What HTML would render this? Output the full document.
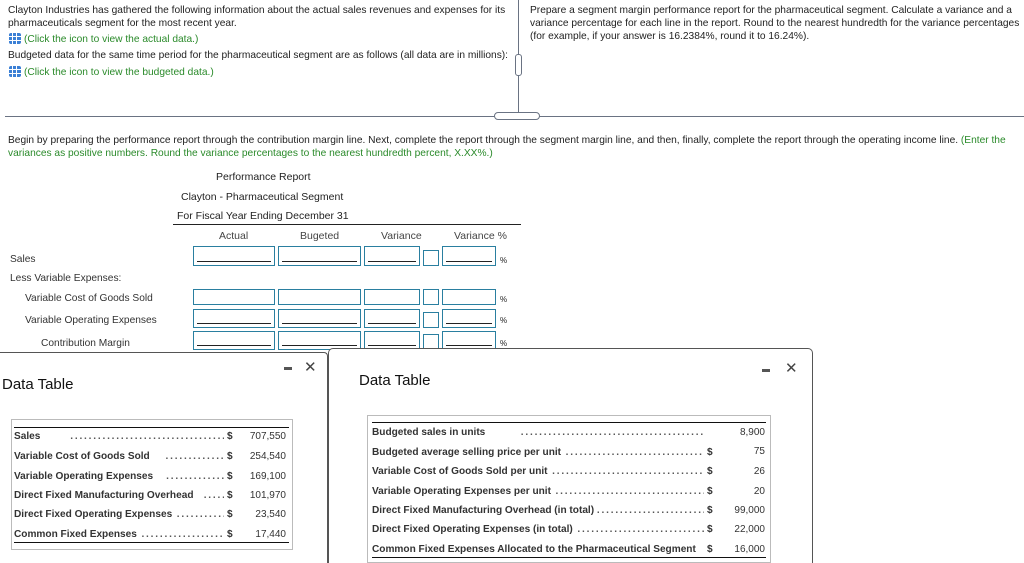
<!DOCTYPE html>
<html><head><meta charset="utf-8"><style>
*{margin:0;padding:0;box-sizing:border-box}
html,body{width:1024px;height:563px;overflow:hidden}
body{background:#fff;font-family:"Liberation Sans",Arial,sans-serif;color:#222;position:relative;font-size:10.2px}
.a{position:absolute;white-space:nowrap}
.g{color:#2a8a2a}
.ic{display:inline-block;width:12px;height:11px;background:#3a7fd5;border-radius:2px;vertical-align:-2px;margin-right:3px;background-image:linear-gradient(90deg,transparent 3px,#fff 3px,#fff 4px,transparent 4px,transparent 7px,#fff 7px,#fff 8px,transparent 8px),linear-gradient(transparent 3px,#fff 3px,#fff 4px,transparent 4px,transparent 7px,#fff 7px,#fff 8px,transparent 8px)}
.b{position:absolute;border:1.5px solid #2a7fa0;background:#fff}
.b.u::after{content:"";position:absolute;left:3px;right:3px;bottom:3px;border-bottom:1.5px solid #222}
.panel{position:absolute;background:#fff;border:1px solid #555;border-bottom:none}
.dt{font-size:15px;color:#111}
.tb{position:absolute;border:1px solid #bbb}
.r{position:absolute;font-weight:bold;font-size:10.1px;color:#333;overflow:hidden;white-space:nowrap}
.r::after{content:" ........................................................................................";color:#555;letter-spacing:1.8px}
.s{position:absolute;font-weight:bold;font-size:10.1px;color:#333}
.v{position:absolute;font-size:10px;color:#333;text-align:right}
.h{font-size:10.5px}
</style></head><body>
<div class="a" style="left:8px;top:4px;line-height:13px">Clayton Industries has gathered the following information about the actual sales revenues and expenses for its<br>pharmaceuticals segment for the most recent year.</div>
<div class="a g" style="left:9px;top:33px"><span class="ic"></span>(Click the icon to view the actual data.)</div>
<div class="a" style="left:8px;top:50px">Budgeted data for the same time period for the pharmaceutical segment are as follows (all data are in millions):</div>
<div class="a" style="left:9px;top:66px"><span class="g"><span class="ic"></span>(Click the icon to view the budgeted data.)</span></div>
<div class="a" style="left:530px;top:4px;line-height:13px">Prepare a segment margin performance report for the pharmaceutical segment. Calculate a variance and a<br>variance percentage for each line in the report. Round to the nearest hundredth for the variance percentages<br>(for example, if your answer is 16.2384%, round it to 16.24%).</div>
<div class="a" style="left:518px;top:0;width:1px;height:116px;background:#6a7383"></div>
<div class="a" style="left:515px;top:54px;width:7px;height:22px;border:1px solid #6a7383;border-radius:3px;background:#fff"></div>
<div class="a" style="left:5px;top:116px;width:1019px;height:1px;background:#6a7383"></div>
<div class="a" style="left:494px;top:112px;width:46px;height:8px;border:1px solid #6a7383;border-radius:4px;background:#fff"></div>
<div class="a" style="left:8px;top:135px;line-height:12.5px">Begin by preparing the performance report through the contribution margin line. Next, complete the report through the segment margin line, and then, finally, complete the report through the operating income line. <span class="g">(Enter the</span><br><span class="g">variances as positive numbers. Round the variance percentages to the nearest hundredth percent, X.XX%.)</span></div>
<div class="a h" style="left:216px;top:171px">Performance Report</div>
<div class="a h" style="left:181px;top:191px">Clayton - Pharmaceutical Segment</div>
<div class="a h" style="left:177px;top:210px">For Fiscal Year Ending December 31</div>
<div class="a" style="left:173px;top:224px;width:348px;height:1px;background:#222"></div>
<div class="a h" style="left:219px;top:230px;color:#444">Actual</div>
<div class="a h" style="left:300px;top:230px;color:#444">Bugeted</div>
<div class="a h" style="left:381px;top:230px;color:#444">Variance</div>
<div class="a h" style="left:454px;top:230px;color:#444">Variance %</div>
<div class="a" style="left:10px;top:254px;color:#333">Sales</div>
<div class="a" style="left:10px;top:273px;color:#333">Less Variable Expenses:</div>
<div class="a" style="left:25px;top:293px;color:#333">Variable Cost of Goods Sold</div>
<div class="a" style="left:25px;top:315px;color:#333">Variable Operating Expenses</div>
<div class="a" style="left:41px;top:338px;color:#333">Contribution Margin</div>
<div class="b u" style="left:193px;top:246px;width:82px;height:20px"></div><div class="b u" style="left:278px;top:246px;width:83px;height:20px"></div><div class="b u" style="left:364px;top:246px;width:56px;height:20px"></div><div class="b" style="left:423px;top:250px;width:16px;height:16px"></div><div class="b u" style="left:442px;top:246px;width:54px;height:20px"></div><div class="a" style="left:500px;top:256px;font-size:8px">%</div>
<div class="b" style="left:193px;top:289px;width:82px;height:16px"></div><div class="b" style="left:278px;top:289px;width:83px;height:16px"></div><div class="b" style="left:364px;top:289px;width:56px;height:16px"></div><div class="b" style="left:423px;top:289px;width:16px;height:16px"></div><div class="b" style="left:442px;top:289px;width:54px;height:16px"></div><div class="a" style="left:500px;top:295px;font-size:8px">%</div>
<div class="b u" style="left:193px;top:309px;width:82px;height:19px"></div><div class="b u" style="left:278px;top:309px;width:83px;height:19px"></div><div class="b u" style="left:364px;top:309px;width:56px;height:19px"></div><div class="b" style="left:423px;top:312px;width:16px;height:16px"></div><div class="b u" style="left:442px;top:309px;width:54px;height:19px"></div><div class="a" style="left:500px;top:316px;font-size:8px">%</div>
<div class="b u" style="left:193px;top:331px;width:82px;height:19px"></div><div class="b u" style="left:278px;top:331px;width:83px;height:19px"></div><div class="b u" style="left:364px;top:331px;width:56px;height:19px"></div><div class="b" style="left:423px;top:334px;width:16px;height:16px"></div><div class="b u" style="left:442px;top:331px;width:54px;height:19px"></div><div class="a" style="left:500px;top:339px;font-size:8px">%</div>
<!-- left panel -->
<div class="panel" style="left:-2px;top:352px;width:330px;height:211px;border-radius:0 4px 0 0">
<div class="a dt" style="left:3px;top:23px">Data Table</div>
<div class="a" style="left:285px;top:14px;width:8px;height:3px;background:#555"></div>
<div class="a" style="left:305px;top:5px;font-size:15px;color:#444">✕</div>
<div class="tb" style="left:12px;top:66px;width:282px;height:131px">
<div class="a" style="left:2px;top:7px;width:275px;height:1px;background:#111"></div>
<div class="a" style="left:2px;top:122px;width:275px;height:1px;background:#111"></div>
</div>
</div>
<div class="r" style="left:14px;top:431px;width:210px">Sales &nbsp;&nbsp;&nbsp;&nbsp;&nbsp;&nbsp;&nbsp;&nbsp;</div>
<div class="r" style="left:14px;top:451px;width:210px">Variable Cost of Goods Sold &nbsp;&nbsp;&nbsp;</div>
<div class="r" style="left:14px;top:471px;width:210px">Variable Operating Expenses &nbsp;&nbsp;</div>
<div class="r" style="left:14px;top:490px;width:210px">Direct Fixed Manufacturing Overhead &nbsp;</div>
<div class="r" style="left:14px;top:509px;width:210px">Direct Fixed Operating Expenses</div>
<div class="r" style="left:14px;top:529px;width:210px">Common Fixed Expenses</div>
<div class="s" style="left:227px;top:431px">$</div><div class="s" style="left:227px;top:451px">$</div><div class="s" style="left:227px;top:471px">$</div><div class="s" style="left:227px;top:490px">$</div><div class="s" style="left:227px;top:509px">$</div><div class="s" style="left:227px;top:529px">$</div>
<div class="v" style="left:240px;width:46px;top:431px">707,550</div>
<div class="v" style="left:240px;width:46px;top:451px">254,540</div>
<div class="v" style="left:240px;width:46px;top:471px">169,100</div>
<div class="v" style="left:240px;width:46px;top:490px">101,970</div>
<div class="v" style="left:240px;width:46px;top:509px">23,540</div>
<div class="v" style="left:240px;width:46px;top:529px">17,440</div>
<!-- right panel -->
<div class="panel" style="left:328px;top:348px;width:485px;height:215px;border-radius:5px 5px 0 0">
<div class="a dt" style="left:30px;top:23px">Data Table</div>
<div class="a" style="left:433px;top:20px;width:8px;height:3px;background:#555"></div>
<div class="a" style="left:456px;top:10px;font-size:15px;color:#444">✕</div>
<div class="tb" style="left:38px;top:66px;width:404px;height:148px">
<div class="a" style="left:4px;top:6px;width:394px;height:1px;background:#111"></div>
<div class="a" style="left:4px;top:141px;width:394px;height:1px;background:#111"></div>
</div>
</div>
<div class="r" style="left:372px;top:427px;width:332px">Budgeted sales in units &nbsp;&nbsp;&nbsp;&nbsp;&nbsp;&nbsp;&nbsp;&nbsp;&nbsp;&nbsp;</div>
<div class="r" style="left:372px;top:447px;width:332px">Budgeted average selling price per unit</div>
<div class="r" style="left:372px;top:466px;width:332px">Variable Cost of Goods Sold per unit</div>
<div class="r" style="left:372px;top:486px;width:332px">Variable Operating Expenses per unit</div>
<div class="r" style="left:372px;top:505px;width:332px">Direct Fixed Manufacturing Overhead (in total) </div>
<div class="r" style="left:372px;top:524px;width:332px">Direct Fixed Operating Expenses (in total)</div>
<div class="s" style="left:372px;top:544px">Common Fixed Expenses Allocated to the Pharmaceutical Segment</div>
<div class="s" style="left:707px;top:447px">$</div><div class="s" style="left:707px;top:466px">$</div><div class="s" style="left:707px;top:486px">$</div><div class="s" style="left:707px;top:505px">$</div><div class="s" style="left:707px;top:524px">$</div><div class="s" style="left:707px;top:544px">$</div>
<div class="v" style="left:715px;width:50px;top:427px">8,900</div>
<div class="v" style="left:715px;width:50px;top:446px">75</div>
<div class="v" style="left:715px;width:50px;top:466px">26</div>
<div class="v" style="left:715px;width:50px;top:486px">20</div>
<div class="v" style="left:715px;width:50px;top:505px">99,000</div>
<div class="v" style="left:715px;width:50px;top:524px">22,000</div>
<div class="v" style="left:715px;width:50px;top:544px">16,000</div>
</body></html>
